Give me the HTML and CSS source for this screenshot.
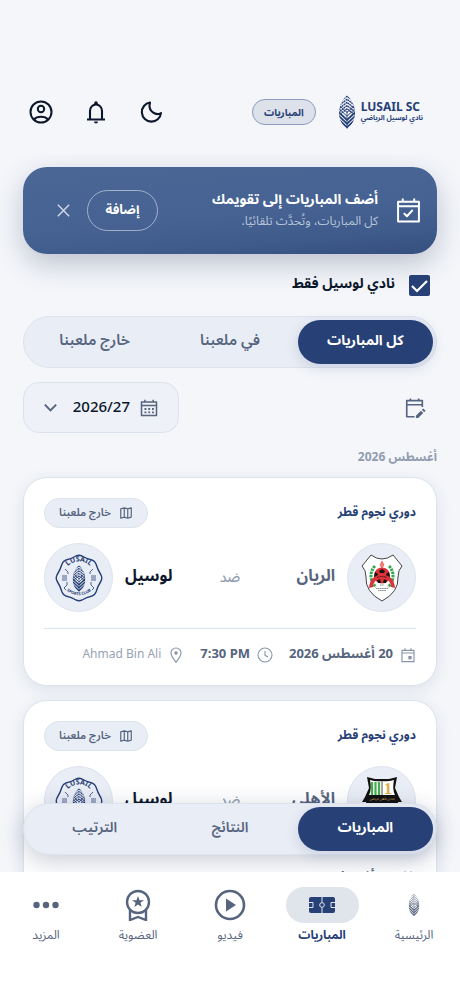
FILE: index.html
```html
<!DOCTYPE html>
<html lang="ar" dir="rtl">
<head>
    <meta charset="UTF-8">
    <meta name="viewport" content="width=device-width, initial-scale=1.0">
    <title>المباريات - نادي لوسيل الرياضي</title>
    <link rel="stylesheet" href="styles.css">
</head>
<body>
    <!-- shared icons -->
    <svg class="sprite" aria-hidden="true">
        <symbol id="leaf" viewBox="0 0 34 64">
            <clipPath id="leafClip"><path d="M17 0C25 8 32 19 32 34C32 47 26 58 17 64C8 58 2 47 2 34C2 19 9 8 17 0Z"/></clipPath>
            <g clip-path="url(#leafClip)" fill="none" stroke="currentColor">
                <path d="M0 15L17 2L34 15M0 21L17 8L34 21M0 27L17 14L34 27M0 33L17 20L34 33M0 39L17 26L34 39" stroke-width="2.600" stroke-dasharray="3.500 1"/>
                <path d="M0 17L17 33L34 17M0 24L17 40L34 24" stroke-width="1.800"/>
                <path d="M0 31L17 47L34 31M0 38L17 54L34 38M0 45L17 61L34 45" stroke-width="3.400"/>
                <path d="M17 30V64" stroke-width="1.500"/>
            </g>
        </symbol>
        <symbol id="lusail" viewBox="0 0 48 48">
            <path d="M21 2Q24 .5 27 2Q31.500 4.700 37 6Q40 7 41 10Q42.800 16 46 21Q47.500 24 46 27Q42.800 32 41 38Q40 41 37 42Q31.500 43.300 27 46Q24 47.500 21 46Q16.500 43.300 11 42Q8 41 7 38Q5.200 32 2 27Q.5 24 2 21Q5.200 16 7 10Q8 7 11 6Q16.500 4.700 21 2Z" fill="none" stroke="currentColor" stroke-width="1.400"/>
            <path d="M10 15L13 18V20M38 15L35 18V20M12 28V31L9 34L11 36M36 28V31L39 34L37 36" fill="none" stroke="currentColor" stroke-width=".8"/>
            <path d="M7 22H12M7 24H12M7 26H12M36 22H41M36 24H41M36 26H41" stroke="currentColor" stroke-width=".8"/>
            <use href="#leaf" x="16" y="11" width="16" height="27"/>
        </symbol>
        <symbol id="map" viewBox="0 0 24 24">
            <path d="M3 5L9 3L15 5L21 3V19L15 21L9 19L3 21ZM9 3V19M15 5V21" fill="none" stroke="currentColor" stroke-width="2" stroke-linejoin="round"/>
        </symbol>
        <symbol id="event" viewBox="0 0 24 24">
            <path d="M3 5H21V22H3ZM3 9H21M7.500 2V5M16.500 2V5" fill="none" stroke="currentColor" stroke-width="1.700" stroke-linejoin="round"/>
            <path d="M12.500 13.500H17.500V18.500H12.500Z" fill="currentColor"/>
        </symbol>
        <symbol id="clock" viewBox="0 0 24 24">
            <path d="M12 1.500A10.500 10.500 0 1 0 12 22.500A10.500 10.500 0 1 0 12 1.500M12 6V12.500L16.500 15" fill="none" stroke="currentColor" stroke-width="1.600"/>
        </symbol>
        <symbol id="pin" viewBox="0 0 24 24">
            <path d="M12 23C9 19 4.500 14 4.500 9A7.500 7.500 0 0 1 19.500 9C19.500 14 15 19 12 23Z" fill="none" stroke="currentColor" stroke-width="1.700"/>
            <circle cx="12" cy="9" r="2.600" fill="currentColor"/>
        </symbol>
    </svg>

    <header class="header">
        <a class="logo" href="#">
            <svg class="logo-leaf" aria-hidden="true"><use href="#leaf"/></svg>
            <span class="logo-name">
                <b dir="ltr">LUSAIL SC</b>
                <small>نادي لوسيل الرياضي</small>
            </span>
        </a>
        <span class="page-pill">المباريات</span>
        <div class="header-actions">
            <button class="icon-btn" aria-label="الوضع الليلي">
                <svg viewBox="0 0 24 24"><path d="M11 2.500A9.600 9.600 0 1 0 22 13C17.500 16 8.500 12 11 2.500Z" fill="none" stroke="currentColor" stroke-width="2.100" stroke-linejoin="round"/></svg>
            </button>
            <button class="icon-btn" aria-label="الإشعارات">
                <svg viewBox="0 0 24 24"><path d="M3 19.500H21M6 19.500V11A6 6.500 0 0 1 18 11V19.500" fill="none" stroke="currentColor" stroke-width="2.100"/><path d="M10.200 5V3A1.800 1.800 0 0 1 13.800 3V5ZM10 21.500H14A2 2 0 0 1 10 21.500Z" fill="currentColor"/></svg>
            </button>
            <button class="icon-btn" aria-label="الحساب">
                <svg viewBox="0 0 24 24"><g fill="none" stroke="currentColor" stroke-width="2"><circle cx="12" cy="12" r="10.500"/><circle cx="12" cy="9" r="3.200"/><path d="M5 19.500C8 15.800 16 15.800 19 19.500"/></g></svg>
            </button>
        </div>
    </header>

    <main class="content">
        <section class="banner">
            <svg class="banner-icon" viewBox="0 0 24 24" aria-hidden="true"><path d="M2 3.500H22V22.500H2ZM2 8H22M6.500 .5V3.500M17.500 .5V3.500M7.500 14.500L10.500 17.500L16 11.500" fill="none" stroke="currentColor" stroke-width="1.900" stroke-linejoin="round"/></svg>
            <div class="banner-text">
                <h2>أضف المباريات إلى تقويمك</h2>
                <p>كل المباريات، وتُحدَّث تلقائيًا.</p>
            </div>
            <button class="banner-add">إضافة</button>
            <button class="banner-close" aria-label="إغلاق">
                <svg viewBox="0 0 24 24"><path d="M4 4L20 20M20 4L4 20" stroke="currentColor" stroke-width="2"/></svg>
            </button>
        </section>

        <label class="only-lusail">
            <input type="checkbox" checked>
            <span>نادي لوسيل فقط</span>
        </label>

        <div class="segments filter">
            <button class="segment active">كل المباريات</button>
            <button class="segment">في ملعبنا</button>
            <button class="segment">خارج ملعبنا</button>
        </div>

        <div class="toolbar">
            <button class="edit-btn" aria-label="تعديل التقويم">
                <svg viewBox="0 0 24 24"><path d="M11.500 21.500H3V4H20V11M3 8.500H20M7 1.500V4M16 1.500V4" fill="none" stroke="currentColor" stroke-width="1.800" stroke-linejoin="round"/><path d="M13 23V20.500L18.500 15L21 17.500L15.500 23ZM19.500 14L21 12.500L23.500 15L22 16.500Z" fill="currentColor"/></svg>
            </button>
            <div class="season">
                <svg class="season-calendar" viewBox="0 0 24 24" aria-hidden="true"><path d="M2 4H22V22H2ZM2 8.500H22M6.500 1V4M17.500 1V4" fill="none" stroke="currentColor" stroke-width="2" stroke-linejoin="round"/><path d="M6 12H8.500V14.500H6ZM11 12H13.500V14.500H11ZM16 12H18.500V14.500H16ZM6 16.500H8.500V19H6ZM11 16.500H13.500V19H11ZM16 16.500H18.500V19H16Z" fill="currentColor"/></svg>
                <select aria-label="الموسم">
                    <option>2026/27</option>
                </select>
                <svg class="season-arrow" viewBox="0 0 24 24" aria-hidden="true"><path d="M4 8L12 16L20 8" fill="none" stroke="currentColor" stroke-width="2.800"/></svg>
            </div>
        </div>

        <h3 class="month">أغسطس 2026</h3>

        <article class="match">
            <div class="match-head">
                <span class="league">دوري نجوم قطر</span>
                <span class="venue-pill"><svg aria-hidden="true"><use href="#map"/></svg><span>خارج ملعبنا</span></span>
            </div>
            <div class="teams">
                <div class="team">
                    <span class="crest">
                        <svg viewBox="0 0 48 48" aria-hidden="true">
                            <path d="M13 1Q24 9 35 1L44 12Q40 16 40 23Q41 38 24 47Q7 38 8 23Q8 16 4 12Z" fill="#fff" stroke="#444" stroke-width="1"/>
                            <path d="M17 12C11 18 12 28 18 33M31 12C37 18 36 28 30 33" fill="none" stroke="#35a653" stroke-width="3" stroke-dasharray="2.500 .8"/>
                            <circle cx="24" cy="21.500" r="8" fill="#e03038"/>
                            <path d="M24 15L27 17L26 19H22L21 17ZM17 18L20 20L19 23H16ZM31 18L28 20L29 23H32ZM19 26L22 25L23 29H20ZM29 26L26 25L25 29H28Z" fill="#151515"/>
                            <path d="M24 7L26 11L24 14L22 11Z" fill="#f08078" stroke="#d33" stroke-width=".5"/>
                            <path d="M11 34Q12 21 24 21Q36 21 37 34L33 33Q33 25 24 25Q15 25 15 33Z" fill="#e03038"/>
                            <path d="M19 23.500Q24 21.500 29 23.500" fill="none" stroke="#222" stroke-width=".8" stroke-dasharray="2 .4"/>
                            <path d="M22 31H26M18 34.500H30M20 36.500H28" stroke="#777" stroke-width=".8" stroke-dasharray="1.500 .3"/>
                        </svg>
                    </span>
                    <strong>الريان</strong>
                </div>
                <span class="versus">ضد</span>
                <div class="team home">
                    <strong>لوسيل</strong>
                    <span class="crest">
                        <svg viewBox="0 0 48 48" aria-hidden="true">
                            <use href="#lusail"/>
                            <path id="arcTop" d="M9 19A15.500 15.500 0 0 1 39 19" fill="none"/>
                            <path id="arcBottom" d="M8 32A18.500 18.500 0 0 0 40 32" fill="none"/>
                            <text class="crest-text"><textPath href="#arcTop" startOffset="50%" text-anchor="middle">LUSAIL</textPath></text>
                            <text class="crest-text crest-text-small"><textPath href="#arcBottom" startOffset="50%" text-anchor="middle">SPORTS CLUB</textPath></text>
                        </svg>
                    </span>
                </div>
            </div>
            <div class="match-info">
                <span><svg aria-hidden="true"><use href="#event"/></svg><b>20 أغسطس 2026</b></span>
                <span><svg aria-hidden="true"><use href="#clock"/></svg><b dir="ltr">7:30 PM</b></span>
                <span class="stadium"><svg aria-hidden="true"><use href="#pin"/></svg><bdi>Ahmad Bin Ali</bdi></span>
            </div>
        </article>

        <article class="match">
            <div class="match-head">
                <span class="league">دوري نجوم قطر</span>
                <span class="venue-pill"><svg aria-hidden="true"><use href="#map"/></svg><span>خارج ملعبنا</span></span>
            </div>
            <div class="teams">
                <div class="team">
                    <span class="crest">
                        <svg viewBox="0 0 48 48" aria-hidden="true">
                            <path d="M9 0L17 2H31L39 0L37 11L41 20L44 25L40 25Q39 40 24 47Q9 40 8 25L4 25L7 20L11 11Z" fill="#111"/>
                            <path d="M12 3Q18 5 24 4Q30 5 36 3Q34 12 37 18H11Q14 12 12 3Z" fill="#fff"/>
                            <path d="M14 5V18M17.500 5V18M21 5V18" stroke="#45ad4c" stroke-width="2.200"/>
                            <path d="M24 4V18" stroke="#222" stroke-width=".8"/>
                            <text class="ahli-one" x="30" y="17">1</text>
                            <text class="ahli-name" x="24" y="22.500">النادي الأهلي الرياضي</text>
                        </svg>
                    </span>
                    <strong>الأهلي</strong>
                </div>
                <span class="versus">ضد</span>
                <div class="team home">
                    <strong>لوسيل</strong>
                    <span class="crest">
                        <svg viewBox="0 0 48 48" aria-hidden="true">
                            <use href="#lusail"/>
                            <text class="crest-text"><textPath href="#arcTop" startOffset="50%" text-anchor="middle">LUSAIL</textPath></text>
                        </svg>
                    </span>
                </div>
            </div>
            <div class="match-info">
                <span><svg aria-hidden="true"><use href="#event"/></svg><b>28 أغسطس 2026</b></span>
            </div>
        </article>
    </main>

    <!-- floats over the match list -->
    <div class="segments floating">
        <button class="segment active">المباريات</button>
        <button class="segment">النتائج</button>
        <button class="segment">الترتيب</button>
    </div>

    <nav class="tabbar">
        <a href="#" class="tab">
            <span class="tab-icon"><svg class="tab-leaf" aria-hidden="true"><use href="#leaf"/></svg></span>
            الرئيسية
        </a>
        <a href="#" class="tab active">
            <span class="tab-icon"><svg class="tab-pitch" viewBox="0 0 26 16" aria-hidden="true"><rect width="26" height="16" rx="2" fill="currentColor"/><g fill="none" stroke="#e0e5ec" stroke-width="1"><path d="M13 0V5.500M13 10.500V16M0 5.500H4V10.500H0M26 5.500H22V10.500H26"/><circle cx="13" cy="8" r="2.300"/></g></svg></span>
            المباريات
        </a>
        <a href="#" class="tab">
            <span class="tab-icon"><svg viewBox="0 0 32 32" aria-hidden="true"><circle cx="16" cy="16" r="14" fill="none" stroke="currentColor" stroke-width="2.600"/><path d="M12 9.500V22.500L22 16Z" fill="currentColor"/></svg></span>
            فيديو
        </a>
        <a href="#" class="tab">
            <span class="tab-icon"><svg viewBox="0 0 32 32" aria-hidden="true"><g fill="none" stroke="currentColor" stroke-width="2.400"><circle cx="16" cy="13" r="11"/><path d="M8 21V31L16 28L24 31V21"/></g><path d="M16 7L17.500 11.200H22L18.400 13.800L19.700 18L16 15.400L12.300 18L13.600 13.800L10 11.200H14.500Z" fill="currentColor"/></svg></span>
            العضوية
        </a>
        <a href="#" class="tab">
            <span class="tab-icon"><svg viewBox="0 0 32 32" aria-hidden="true"><g fill="currentColor"><circle cx="6.500" cy="16" r="3.200"/><circle cx="16" cy="16" r="3.200"/><circle cx="25.500" cy="16" r="3.200"/></g></svg></span>
            المزيد
        </a>
    </nav>
</body>
</html>
```
FILE: styles.css
```css
* {
    box-sizing: border-box;
}

body {
    margin: 0;
    height: 100vh;
    display: flex;
    flex-direction: column;
    position: relative;
    background-color: #f4f6fa;
    color: #0d172b;
    font-family: "Noto Sans", "Noto Sans Arabic", "DejaVu Sans", sans-serif;
    font-size: 14px;
}

h2, h3, p {
    margin: 0;
}

button, select {
    font-family: inherit;
    color: inherit;
    border: 0;
    background: none;
    padding: 0;
}

a {
    color: inherit;
    text-decoration: none;
}

svg {
    display: block;
    flex-shrink: 0;
    direction: ltr;
}

.sprite {
    position: absolute;
    width: 0;
    height: 0;
}

/* header */
.header {
    display: flex;
    align-items: center;
    padding: 88px 37px 18px 17px;
}

.logo {
    display: flex;
    align-items: center;
    gap: 5px;
    flex-direction: row-reverse;
    color: #274076;
}

.logo-leaf {
    width: 18px;
    height: 34px;
}

.logo-name {
    display: flex;
    flex-direction: column;
    padding-bottom: 2px;
}

.logo-name b {
    font-size: 12px;
    line-height: 14px;
}

.logo-name small {
    font-size: 7px;
    line-height: 8px;
    font-weight: bold;
}

.page-pill {
    margin-right: 22px;
    padding: 0 11px;
    border: 1px solid #8c9dbf;
    border-radius: 13px;
    background-color: #dce1ea;
    color: #274076;
    font-size: 10px;
    line-height: 24px;
    font-weight: bold;
}

.header-actions {
    display: flex;
    gap: 7px;
    margin-right: auto;
}

.icon-btn {
    width: 48px;
    height: 48px;
    display: grid;
    place-items: center;
}

.icon-btn svg {
    width: 24px;
    height: 24px;
}

/* content */
.content {
    flex: 1;
    min-height: 0;
    overflow: hidden;
    padding: 13px 23px 0;
}

.banner {
    display: flex;
    align-items: center;
    min-height: 87px;
    padding: 0 16px 0 17px;
    border-radius: 24px;
    background: linear-gradient(175deg, #4a6796 0%, #456292 55%, #3e5b8b 78%, #354f7e 100%);
    box-shadow: 0 10px 28px rgba(30, 45, 85, .26);
    color: #fff;
}

.banner-icon {
    width: 25px;
    height: 25px;
}

.banner-text {
    flex: 1;
    margin-right: 18px;
    padding-bottom: 4px;
}

.banner-text h2 {
    font-size: 14px;
    line-height: 24px;
}

.banner-text p {
    font-size: 12px;
    line-height: 20px;
    color: #b9c5da;
}

.banner-add {
    width: 71px;
    height: 41px;
    padding-bottom: 2px;
    border: 1px solid #a3b2cc;
    border-radius: 21px;
    font-size: 13px;
    font-weight: bold;
}

.banner-close {
    width: 47px;
    height: 40px;
    display: grid;
    place-items: center;
    color: #d0d9e8;
}

.banner-close svg {
    width: 17px;
    height: 17px;
}

.only-lusail {
    display: flex;
    align-items: center;
    gap: 14px;
    height: 62px;
    padding-right: 7px;
    font-weight: bold;
}

.only-lusail span {
    padding-bottom: 3px;
}

.only-lusail input {
    appearance: none;
    width: 21px;
    height: 21px;
    margin: 0;
    border-radius: 2px;
    background: #274076 url("data:image/svg+xml,%3Csvg xmlns='http://www.w3.org/2000/svg' viewBox='0 0 21 21'%3E%3Cpath d='M3 11L8 16L18 6' fill='none' stroke='white' stroke-width='2.2'/%3E%3C/svg%3E");
}

.segments {
    display: flex;
    padding: 3px;
    border: 1px solid #dde3ed;
    border-radius: 26px;
    background-color: #e9edf5;
}

.segment {
    flex: 1;
    height: 44px;
    padding-bottom: 4px;
    border-radius: 22px;
    color: #56647e;
    font-size: 14px;
    font-weight: 600;
}

.filter .segment {
    font-size: 15px;
}

.segment.active {
    background-color: #274076;
    color: #fff;
    font-weight: bold;
    box-shadow: 0 4px 14px rgba(39, 64, 118, .16);
}

.filter .segment.active {
    font-size: 14px;
}

.toolbar {
    display: flex;
    align-items: center;
    justify-content: space-between;
    margin-top: 14px;
}

.edit-btn {
    width: 44px;
    height: 44px;
    display: grid;
    place-items: center;
    color: #56647e;
}

.edit-btn svg {
    width: 22px;
    height: 22px;
}

.season {
    display: flex;
    align-items: center;
    height: 51px;
    padding: 0 20px 0 18px;
    border: 1px solid #dde3ed;
    border-radius: 16px;
    background-color: #eef1f7;
    color: #56647e;
}

.season select {
    appearance: none;
    margin: 0 10px 0 13px;
    padding-bottom: 3px;
    font-size: 15px;
    font-weight: 500;
    color: #0d172b;
}

.season-calendar {
    width: 18px;
    height: 18px;
}

.season-arrow {
    width: 17px;
    height: 17px;
}

.month {
    margin: 14px 0 10px;
    font-size: 12px;
    line-height: 20px;
    color: #919caf;
}

/* match cards */
.match {
    margin-bottom: 14px;
    padding: 20px 20px 18px;
    border: 1px solid #dde3ed;
    border-radius: 24px;
    background-color: #fff;
    box-shadow: 0 4px 16px rgba(30, 45, 85, .1);
}

.match-head {
    display: flex;
    align-items: center;
    justify-content: space-between;
}

.league {
    padding-bottom: 2px;
    color: #274076;
    font-size: 12px;
    font-weight: bold;
}

.venue-pill {
    display: flex;
    align-items: center;
    gap: 8px;
    height: 30px;
    padding: 0 14px;
    border: 1px solid #dde3ed;
    border-radius: 15px;
    background-color: #e9edf5;
    color: #56647e;
    font-size: 11px;
    font-weight: 600;
}

.venue-pill span {
    padding-bottom: 2px;
}

.venue-pill svg {
    width: 14px;
    height: 14px;
}

.teams {
    display: grid;
    grid-template-columns: 1fr auto 1fr;
    align-items: center;
    padding: 15px 0 16px;
    border-bottom: 1px solid #dde3ed;
}

.team {
    display: flex;
    align-items: center;
    gap: 12px;
    color: #56647e;
    font-size: 16px;
}

.team strong {
    padding-bottom: 3px;
}

.team.home {
    justify-content: flex-end;
    color: #0d172b;
}

.crest {
    display: grid;
    place-items: center;
    width: 69px;
    height: 69px;
    border: 1px solid #dde3ed;
    border-radius: 50%;
    background-color: #e9edf5;
    color: #274076;
}

.crest svg {
    width: 48px;
    height: 48px;
}

.crest-text {
    fill: currentColor;
    font-size: 7px;
    font-weight: bold;
}

.crest-text-small {
    font-size: 4px;
}

.ahli-one {
    fill: #dfae45;
    font-family: "Liberation Serif", serif;
    font-size: 16px;
    font-weight: bold;
    text-anchor: middle;
}

.ahli-name {
    fill: #e0bd60;
    font-size: 3px;
    text-anchor: middle;
}

.versus {
    color: #919caf;
    font-size: 14px;
    font-weight: 500;
}

.match-info {
    display: flex;
    align-items: center;
    gap: 16px;
    padding-top: 14px;
    color: #56647e;
    font-size: 13px;
    line-height: 24px;
    white-space: nowrap;
}

.match-info span {
    display: flex;
    align-items: center;
    gap: 7px;
}

.match-info b {
    padding-bottom: 3px;
    line-height: 21px;
}

.match-info svg {
    width: 16px;
    height: 16px;
    color: #8995ab;
}

.match-info .stadium {
    color: #98a2b4;
    font-size: 12px;
}

.stadium bdi {
    padding-bottom: 3px;
    line-height: 21px;
}

/* bottom */
.floating {
    position: absolute;
    right: 23px;
    left: 23px;
    bottom: 145px;
    box-shadow: 0 6px 24px rgba(30, 45, 85, .24);
}

.tabbar {
    position: relative;
    display: flex;
    padding: 15px 0 53px;
    background-color: #fff;
}

.tab {
    flex: 1;
    display: flex;
    flex-direction: column;
    align-items: center;
    color: #56647e;
    font-size: 12px;
    line-height: 24px;
}

.tab.active {
    color: #274076;
    font-weight: bold;
}

.tab-icon {
    display: grid;
    place-items: center;
    width: 73px;
    height: 36px;
    border-radius: 18px;
}

.tab.active .tab-icon {
    background-color: #e0e5ec;
}

.tab-icon svg {
    width: 32px;
    height: 32px;
}

.tab-icon .tab-leaf {
    width: 12px;
    height: 24px;
}

.tab-icon .tab-pitch {
    width: 26px;
    height: 16px;
}
```
